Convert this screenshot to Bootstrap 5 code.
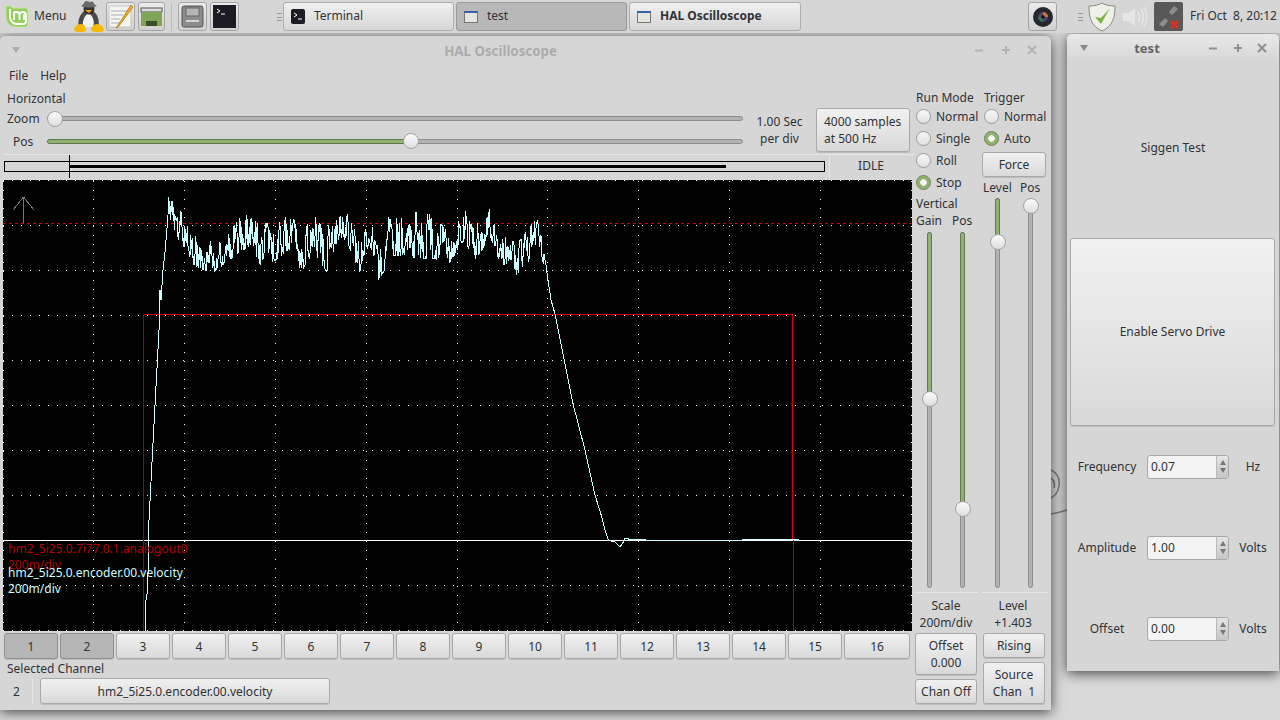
<!DOCTYPE html>
<html lang="en">
<head>
    <meta charset="UTF-8">
    <title>HAL Oscilloscope</title>
    <link href="https://cdn.jsdelivr.net/npm/bootstrap@5.3.0/dist/css/bootstrap.min.css" rel="stylesheet">
    <script src="https://cdn.jsdelivr.net/npm/bootstrap@5.3.0/dist/js/bootstrap.bundle.min.js"></script>
    <style>
        body {
            margin: 0;
            background: #d8d8d8;
            font-family: "Noto Sans", "Liberation Sans", sans-serif;
            font-size: 12px;
            line-height: 17px;
            color: #2f3336;
        }
        .desktop { width: 1280px; height: 720px; overflow: hidden; background: #d9d9d9; }

        /* top panel */
        .panel { height: 33px; background: #d6d6d6; position: relative; z-index: 3; }
        .logo-mint { margin-left: 5px; }
        .menu-label { width: 40px; margin-left: 4px; padding-bottom: 2px; }
        .launch { width: 29px; height: 29px; border: 1px solid #a5a5a5; border-radius: 3px; background: linear-gradient(#ececec, #d0d0d0); flex: none; }
        .launch svg { display: block; }
        .launch-sep { width: 1px; height: 28px; background: #bdbdbd; margin: 0 6px; }
        .handle { width: 5px; height: 8px; border-top: 1px solid #999; border-bottom: 1px solid #999; position: relative; }
        .handle::after { content: ""; position: absolute; left: 0; right: 0; top: 3px; border-top: 1px solid #999; }
        .task { width: 171px; height: 29px; border: 1px solid #adadad; border-radius: 3px; background: linear-gradient(#f0f0f0, #d6d6d6); padding-left: 7px; margin-right: 2px; }
        .task-on { background: #b8b8b8; border-color: #999; }
        .task-win { width: 14px; height: 12px; background: #e6e6e0; border: 1px solid #777; border-top: 2px solid #2f62a8; }
        .task-txt { margin-left: 9px; padding-bottom: 2px; }
        .clock { margin-left: 7px; white-space: pre; padding-bottom: 2px; }

        /* windows */
        .win { position: absolute; background: #d6d6d6; border-radius: 5px 5px 0 0; box-shadow: 0 2px 13px rgba(0, 0, 0, .72); }
        .win-scope { left: 0; top: 36px; width: 1051px; height: 674px; }
        .win-test { left: 1067px; top: 34px; width: 212px; height: 637px; }
        .titlebar { height: 28px; }
        .win-test .titlebar { background: linear-gradient(#e9e9e9, #d6d6d6); border-radius: 5px 5px 0 0; }
        .title-text { font-weight: 700; color: #acacac; font-size: 13.3px; padding-top: 2px; }
        .win-test .title-text { color: #666; font-size: 13px; padding-top: 0; }
        .tri { width: 0; height: 0; border: 4.5px solid transparent; border-top: 6px solid #adadad; border-bottom: 0; }
        .win-test .tri { border-top-color: #8a8a8a; }
        .win-ctl { width: 86px; padding-right: 14px; color: #b2b2b2; }
        .win-test .win-ctl { width: 80px; padding-right: 12px; color: #909090; }

        /* gtk style widgets */
        .gtk-btn {
            --bs-btn-padding-x: 0;
            --bs-btn-padding-y: 0;
            --bs-btn-font-size: 12px;
            --bs-btn-line-height: 17px;
            --bs-btn-border-radius: 3px;
            --bs-btn-color: #2f3336;
            background: linear-gradient(#f1f1f1, #d9d9d9);
            border: 1px solid #a9a9a9;
            box-shadow: 0 1px 0 #bdbdbd;
            display: block;
        }
        .gtk-on { background: #b6b6b6; border-color: #8f8f8f; }
        .gtk-radio.form-check-input {
            width: 15px; height: 15px; margin: 0; flex: none;
            background: linear-gradient(#f8f8f8, #e0e0e0);
            border: 1px solid #9c9c9c;
        }
        .gtk-radio.form-check-input:checked {
            background: radial-gradient(circle, #f4f4f4 0 3px, #8fb271 3.6px);
            border-color: #6d8257;
        }
        .radio-row { height: 22px; gap: 5px; }
        .thumb {
            position: absolute; width: 16px; height: 16px; border-radius: 50%;
            background: linear-gradient(#fbfbfb, #dedede); border: 1px solid #a2a2a2;
            transform: translate(-50%, -50%);
        }
        .hslide { position: relative; height: 5px; background: #b3b3b3; border: 1px solid #8c8c8c; border-radius: 3px; }
        .hfill { height: 100%; background: #8fb271; border-radius: 3px 0 0 3px; outline: 1px solid #66784f; }
        .vslide { position: relative; width: 5px; background: #b3b3b3; border: 1px solid #8c8c8c; border-radius: 3px; }
        .vfill { width: 100%; background: #8fb271; border-radius: 3px 3px 0 0; outline: 1px solid #66784f; }
        .sep-h { border-top: 1px solid #e6e6e6; }

        /* scope window */
        .menu-row { height: 22px; padding-left: 9px; gap: 12px; }
        .left-col { width: 911px; margin-left: 3px; }
        .right-col { width: 134px; }
        .h-label { height: 22px; padding: 2px 0 0 4px; }
        .h-name { width: 44px; padding-left: 4px; }
        .sec-text { width: 73px; }
        .status-row { height: 26px; margin-top: 2px; padding-bottom: 3px; }
        .scan-box { position: relative; width: 821px; height: 11px; margin-left: 1px; border: 1px solid #000; }
        .scan-line { position: absolute; left: 65px; top: 3px; width: 656px; height: 3px; background: #000; }
        .scan-tick { position: absolute; left: 64px; top: -7px; width: 1px; height: 23px; background: #000; }
        .idle { width: 83px; margin-left: 4px; border-left: 1px solid #e6e6e6; line-height: 24px; }
        .screen { position: relative; width: 909px; height: 451px; background: #000; }
        .screen svg { display: block; }
        .screen-text { position: absolute; left: 5px; top: 361px; line-height: 16px; white-space: nowrap; }
        .t-red { color: #b30000; }
        .t-cyan { color: #ccffff; position: absolute; left: 0; top: 24px; }
        .chan-row { gap: 2px; margin-top: 2px; padding-left: 1px; height: 26px; }
        .chan-btn { width: 54px; height: 26px; }
        .chan-last { width: 66px; }
        .sel-label { height: 18px; padding-left: 4px; }
        .sel-row { height: 26px; margin-top: 1px; }
        .sel-num { width: 30px; padding-left: 10px; height: 26px; border-right: 1px solid #e6e6e6; }
        .sel-btn { width: 290px; height: 26px; margin-left: 7px; }
        .col-a { width: 68px; padding-left: 2px; }
        .col-b { width: 66px; }
        .cap-one { height: 19px; padding-top: 3px; }
        .cap-vert { height: 19px; padding-top: 2px; }
        .cap-pair { height: 17px; }
        .slider-pair-a { height: 356px; margin-top: 3px; padding-left: 11px; gap: 28px; }
        .slider-pair-b { height: 390px; margin-top: 1px; padding-left: 13px; gap: 28px; }
        .readout { margin-top: 4px; padding-top: 4px; text-align: center; height: 39px; }
        .readout-a { margin-left: -2px; width: 64px; }
        .readout-b { padding-right: 4px; }
        .force { width: 64px; height: 25px; margin-top: 3px; }

        /* test window */
        .siggen { height: 176px; padding-bottom: 6px; }
        .big-btn { width: 205px; height: 188px; margin-left: 3px; padding-bottom: 2px; }
        .sig-row { height: 81px; }
        .sig-name { width: 80px; }
        .spin { width: 82px; height: 24px; border: 1px solid #a8a8a8; border-radius: 3px; background: #f4f4f4; overflow: hidden; }
        .spin-in.form-control { border: 0; border-radius: 0; background: transparent; padding: 0 0 0 3px; font-size: 12px; color: #2f3336; height: 22px; min-height: 0; line-height: 22px; }
        .spin-arrows { width: 12px; background: linear-gradient(#e4e4e4, #c6c6c6); border-left: 1px solid #bbb; gap: 3px; }
        .arr-up { width: 0; height: 0; border: 3.5px solid transparent; border-bottom: 5px solid #777; border-top: 0; }
        .arr-down { width: 0; height: 0; border: 3.5px solid transparent; border-top: 5px solid #777; border-bottom: 0; }
        .sig-unit { width: 48px; }
        .swirl { position: absolute; left: 1051px; top: 468px; z-index: 0; }
    </style>
</head>
<body>
<div class="desktop position-relative">

    <!-- panel -->
    <div class="panel d-flex align-items-center">
        <svg class="logo-mint" width="25" height="24" viewBox="0 0 25 24">
            <path d="M1 1h6v2h13c2 0 3 1 3 3v13c0 2-1 3-3 3h-8C5 22 1 18 1 11z" fill="#93cf5f" stroke="#c4e6a0"/>
            <path d="M5 4v8c0 4 3 7 7 7h6c2 0 3-1 3-3V10c0-2-1-3-3-3-2 0-3 1-3.500 2-.5-1-1.500-2-3.500-2-1 0-2 0-2.500 1" fill="none" stroke="#fff" stroke-width="1.800"/>
            <path d="M9 8v7M14.500 9v6M19 9v6" stroke="#fff" stroke-width="1.800"/>
        </svg>
        <span class="menu-label">Menu</span>
        <svg width="30" height="32" viewBox="0 0 30 32">
            <path d="M11 9C6 13 3 20 5 26l19 0c2-6 0-13-6-17z" fill="#4a4a4a"/>
            <path d="M13 13c-3 3-5 8-4 13h10c2-5 0-10-3-13z" fill="#f2f2f2"/>
            <circle cx="15" cy="8" r="5.500" fill="#333"/>
            <path d="M7 5c3-1 3-5 5-5s3 1 4 1 2-1 3 0 1 3 4 4c-5 2-11 2-16 0z" fill="#6a6a6a"/>
            <path d="M11 9h7l-3 3z" fill="#f5a800"/>
            <path d="M0 29c0-3 3-6 7-6 3 0 5 3 5 6s-11 3-12 0zM17 29c0-3 3-6 6-6 3 0 7 3 7 6s-12 3-13 0z" fill="#f6b800"/>
        </svg>
        <div class="launch" style="margin-left:2px">
            <svg width="27" height="27" viewBox="0 0 27 27">
                <rect x="2" y="3" width="22" height="21" fill="#f6f6f0" stroke="#c4c4c4"/>
                <path d="M4 8h18M4 12h12M4 16h9M4 20h9" stroke="#aab"/>
                <path d="M24 2L11 22l-2 3 3-2L26 4z" fill="#f0b020" stroke="#a06a10" stroke-width=".7"/>
            </svg>
        </div>
        <div class="launch" style="width:27px;margin-left:3px">
            <svg width="25" height="27" viewBox="0 0 25 27">
                <rect x="2" y="5" width="21" height="4" fill="#dcdcdc" stroke="#555"/>
                <rect x="2" y="9" width="21" height="14" fill="#7fa556"/>
                <rect x="7" y="18" width="11" height="5" fill="#3c4e2a"/>
            </svg>
        </div>
        <div class="launch-sep"></div>
        <div class="launch">
            <svg width="27" height="27" viewBox="0 0 27 27">
                <rect x="3" y="3" width="21" height="21" rx="2" fill="#8c8c8c" stroke="#555"/>
                <rect x="7" y="5" width="13" height="8" fill="#b5b5b5" stroke="#666"/>
                <rect x="7" y="17" width="13" height="2" fill="#d5d5d5"/>
            </svg>
        </div>
        <div class="launch" style="margin-left:3px">
            <svg width="27" height="27" viewBox="0 0 27 27">
                <rect x="2" y="2" width="23" height="23" fill="#1d1c24"/>
                <path d="M6 6l3 2-3 2M10 11h4" stroke="#fff" fill="none"/>
            </svg>
        </div>
        <div class="handle" style="margin-left:38px;margin-right:1px"></div>
        <div class="task d-flex align-items-center">
            <svg width="14" height="15" viewBox="0 0 14 15"><rect width="14" height="15" rx="2" fill="#1d1c24"/><path d="M3 4l3 2-3 2M7 10h4" stroke="#fff" fill="none"/></svg>
            <span class="task-txt">Terminal</span>
        </div>
        <div class="task task-on d-flex align-items-center">
            <div class="task-win"></div><span class="task-txt">test</span>
        </div>
        <div class="task d-flex align-items-center" style="width:172px">
            <div class="task-win"></div><span class="task-txt fw-bold">HAL Oscilloscope</span>
        </div>
        <div class="launch" style="margin-left:225px">
            <svg width="27" height="27" viewBox="0 0 27 27">
                <circle cx="14" cy="14" r="10" fill="#26262c"/>
                <circle cx="14" cy="14" r="5" fill="#5a3f6e"/>
                <path d="M14 9a5 5 0 0 1 5 5h-5z" fill="#c7762f"/><path d="M9 14a5 5 0 0 0 5 5v-5z" fill="#2f7a5a"/>
                <circle cx="14" cy="14" r="1.800" fill="#15151a"/>
            </svg>
        </div>
        <div class="handle" style="margin-left:21px"></div>
        <svg width="30" height="30" viewBox="0 0 30 30" style="margin-left:4px">
            <path d="M15 1c3 2 8 3 13 3 0 11-2 20-13 25C4 24 2 15 2 4c5 0 10-1 13-3z" fill="#f0f0ea" stroke="#8a8a82"/>
            <path d="M8 15l6 7 9-16-9 10z" fill="#7cb342"/>
        </svg>
        <svg width="28" height="28" viewBox="0 0 28 28" style="margin-left:4px">
            <path d="M2 10h6l6-5v18l-6-5H2z" fill="#e6e6e6"/>
            <path d="M17 9c2 3 2 7 0 10M20 6c3 5 3 11 0 16M23 4c4 6 4 14 0 20" fill="none" stroke="#e6e6e6" stroke-width="1.600"/>
        </svg>
        <svg width="29" height="29" viewBox="0 0 29 29" style="margin-left:5px">
            <rect width="29" height="29" rx="2" fill="#585858"/>
            <path d="M5 22l6-6 3 3-5 6zM24 7l-6 6-3-3 5-6z" fill="#8d8d8d"/>
            <path d="M17 19l7 7M24 19l-7 7" stroke="#e42b20" stroke-width="2.600"/>
        </svg>
        <span class="clock">Fri Oct  8, 20:12</span>
    </div>

    <svg class="swirl" width="16" height="50" viewBox="0 0 16 50">
        <path d="M0 2c6 3 9 9 8 16-1 6-4 10-8 12M0 10c3 2 4 6 3 10M0 46c6-1 11-2 16-4" fill="none" stroke="#7e7e7e" stroke-width="1.500"/>
    </svg>

    <!-- scope window -->
    <div class="win win-scope">
        <div class="titlebar d-flex align-items-center">
            <div style="width:36px;padding-left:12px"><div class="tri"></div></div>
            <div class="title-text flex-grow-1 text-center">HAL Oscilloscope</div>
            <div class="win-ctl d-flex justify-content-between align-items-center">
                <svg width="10" height="10" style="margin-left:9px"><path d="M1 5.500h8" stroke="currentColor" stroke-width="2"/></svg>
                <svg width="10" height="10"><path d="M1 5h8M5 1v8" stroke="currentColor" stroke-width="2"/></svg>
                <svg width="10" height="10"><path d="M1 1l8 8M9 1l-8 8" stroke="currentColor" stroke-width="2"/></svg>
            </div>
        </div>
        <div class="menu-row d-flex align-items-center"><span>File</span><span>Help</span></div>
        <div class="d-flex">
            <div class="left-col">
                <div class="h-label d-flex align-items-center">Horizontal</div>
                <div class="d-flex" style="height:44px">
                    <div style="width:740px">
                        <div class="d-flex align-items-center" style="height:21px">
                            <div class="h-name">Zoom</div>
                            <div class="hslide flex-grow-1"><div class="thumb" style="left:1%;top:50%"></div></div>
                        </div>
                        <div class="d-flex align-items-center" style="height:24px">
                            <div class="h-name" style="padding-left:10px">Pos</div>
                            <div class="hslide flex-grow-1"><div class="hfill" style="width:52.3%"></div><div class="thumb" style="left:52.3%;top:50%"></div></div>
                        </div>
                    </div>
                    <div class="sec-text text-center align-self-center">1.00 Sec<br>per div</div>
                    <button class="btn gtk-btn text-start" style="width:94px;height:44px;padding-left:7px">4000 samples<br>at 500 Hz</button>
                </div>
                <div class="status-row d-flex align-items-center sep-h">
                    <div class="scan-box"><div class="scan-line"></div><div class="scan-tick"></div></div>
                    <div class="idle text-center">IDLE</div>
                </div>
                <div class="screen">
                    <svg id="scope" width="909" height="451" viewBox="3 180 909 451" shape-rendering="crispEdges"></svg>
                    <div class="screen-text">
                        <div class="t-red">hm2_5i25.0.7i77.0.1.analogout0<br>200m/div</div>
                        <div class="t-cyan">hm2_5i25.0.encoder.00.velocity<br>200m/div</div>
                    </div>
                </div>
                <div class="chan-row d-flex">
                    <button class="btn gtk-btn gtk-on chan-btn">1</button>
                    <button class="btn gtk-btn gtk-on chan-btn">2</button>
                    <button class="btn gtk-btn chan-btn">3</button>
                    <button class="btn gtk-btn chan-btn">4</button>
                    <button class="btn gtk-btn chan-btn">5</button>
                    <button class="btn gtk-btn chan-btn">6</button>
                    <button class="btn gtk-btn chan-btn">7</button>
                    <button class="btn gtk-btn chan-btn">8</button>
                    <button class="btn gtk-btn chan-btn">9</button>
                    <button class="btn gtk-btn chan-btn">10</button>
                    <button class="btn gtk-btn chan-btn">11</button>
                    <button class="btn gtk-btn chan-btn">12</button>
                    <button class="btn gtk-btn chan-btn">13</button>
                    <button class="btn gtk-btn chan-btn">14</button>
                    <button class="btn gtk-btn chan-btn">15</button>
                    <button class="btn gtk-btn chan-btn chan-last">16</button>
                </div>
                <div class="sel-label d-flex align-items-center">Selected Channel</div>
                <div class="sel-row d-flex align-items-center">
                    <div class="sel-num d-flex align-items-center">2</div>
                    <button class="btn gtk-btn sel-btn">hm2_5i25.0.encoder.00.velocity</button>
                </div>
            </div>
            <div class="right-col d-flex">
                <div class="col-a">
                    <div class="cap-one">Run Mode</div>
                    <div class="radio-row d-flex align-items-center"><input class="form-check-input gtk-radio" type="radio" name="run"><span>Normal</span></div>
                    <div class="radio-row d-flex align-items-center"><input class="form-check-input gtk-radio" type="radio" name="run"><span>Single</span></div>
                    <div class="radio-row d-flex align-items-center"><input class="form-check-input gtk-radio" type="radio" name="run"><span>Roll</span></div>
                    <div class="radio-row d-flex align-items-center"><input class="form-check-input gtk-radio" type="radio" name="run" checked><span>Stop</span></div>
                    <div class="cap-vert">Vertical</div>
                    <div class="cap-pair d-flex"><span style="width:36px">Gain</span><span>Pos</span></div>
                    <div class="slider-pair-a d-flex">
                        <div class="vslide"><div class="vfill" style="height:46.9%"></div><div class="thumb" style="left:50%;top:46.9%"></div></div>
                        <div class="vslide"><div class="vfill" style="height:78.1%"></div><div class="thumb" style="left:50%;top:78.1%"></div></div>
                    </div>
                    <div class="readout readout-a sep-h">Scale<br>200m/div</div>
                    <button class="btn gtk-btn" style="width:62px;height:42px;margin:2px 0 4px -1px">Offset<br>0.000</button>
                    <button class="btn gtk-btn" style="width:62px;height:25px;margin-left:-1px">Chan Off</button>
                </div>
                <div class="col-b">
                    <div class="cap-one" style="padding-left:2px">Trigger</div>
                    <div class="radio-row d-flex align-items-center" style="padding-left:2px"><input class="form-check-input gtk-radio" type="radio" name="trig"><span>Normal</span></div>
                    <div class="radio-row d-flex align-items-center" style="padding-left:2px"><input class="form-check-input gtk-radio" type="radio" name="trig" checked><span>Auto</span></div>
                    <button class="btn gtk-btn force">Force</button>
                    <div class="d-flex align-items-center" style="height:20px;padding-left:1px"><span style="width:37px">Level</span><span>Pos</span></div>
                    <div class="slider-pair-b d-flex">
                        <div class="vslide"><div class="vfill" style="height:11%"></div><div class="thumb" style="left:50%;top:11%"></div></div>
                        <div class="vslide"><div class="thumb" style="left:50%;top:1.8%"></div></div>
                    </div>
                    <div class="readout readout-b sep-h">Level<br>+1.403</div>
                    <button class="btn gtk-btn" style="width:62px;height:25px;margin:2px 0 4px 1px">Rising</button>
                    <button class="btn gtk-btn" style="width:62px;height:42px;margin-left:1px">Source<br>Chan&nbsp; 1</button>
                </div>
            </div>
        </div>
    </div>

    <!-- test window -->
    <div class="win win-test d-flex flex-column">
        <div class="titlebar d-flex align-items-center">
            <div style="width:28px;padding-left:13px"><div class="tri"></div></div>
            <div class="title-text flex-grow-1 text-center">test</div>
            <div class="win-ctl d-flex justify-content-between align-items-center">
                <svg width="10" height="10" style="margin-left:9px"><path d="M1 5.500h8" stroke="currentColor" stroke-width="2"/></svg>
                <svg width="10" height="10"><path d="M1 5h8M5 1v8" stroke="currentColor" stroke-width="2"/></svg>
                <svg width="10" height="10"><path d="M1 1l8 8M9 1l-8 8" stroke="currentColor" stroke-width="2"/></svg>
            </div>
        </div>
        <div class="siggen d-flex align-items-center justify-content-center">Siggen Test</div>
        <button class="btn gtk-btn big-btn">Enable Servo Drive</button>
        <div class="sig-row d-flex align-items-center">
            <div class="sig-name text-center">Frequency</div>
            <div class="spin d-flex"><input class="form-control spin-in" value="0.07"><div class="spin-arrows d-flex flex-column align-items-center justify-content-center flex-shrink-0"><div class="arr-up"></div><div class="arr-down"></div></div></div>
            <div class="sig-unit text-center">Hz</div>
        </div>
        <div class="sig-row d-flex align-items-center">
            <div class="sig-name text-center">Amplitude</div>
            <div class="spin d-flex"><input class="form-control spin-in" value="1.00"><div class="spin-arrows d-flex flex-column align-items-center justify-content-center flex-shrink-0"><div class="arr-up"></div><div class="arr-down"></div></div></div>
            <div class="sig-unit text-center">Volts</div>
        </div>
        <div class="sig-row d-flex align-items-center">
            <div class="sig-name text-center">Offset</div>
            <div class="spin d-flex"><input class="form-control spin-in" value="0.00"><div class="spin-arrows d-flex flex-column align-items-center justify-content-center flex-shrink-0"><div class="arr-up"></div><div class="arr-down"></div></div></div>
            <div class="sig-unit text-center">Volts</div>
        </div>
    </div>
</div>

<script>
    // draw grid and traces of the scope, coordinates are page pixels
    var parts = [];
    function line(x1, y1, x2, y2, col, extra) {
        parts.push('<line x1="' + x1 + '" y1="' + y1 + '" x2="' + x2 + '" y2="' + y2 + '" stroke="' + col + '" ' + (extra || '') + '/>');
    }
    var dots = 'stroke-dasharray="1 8"';
    for (var k = 0; k <= 10; k++) {
        var gx = Math.round(2.5 + 90.8 * k) + 0.5;
        var gy = Math.round(180.3 + 45 * k) + 0.5;
        line(gx, 181, gx, 631, '#fff', dots);
        line(3, gy, 912, gy, '#fff', dots);
    }
    line(3, 540.5, 912, 540.5, '#fff');
    line(3, 223.5, 912, 223.5, '#d00000', 'stroke-dasharray="3 3"');
    line(143.5, 315, 143.5, 631, '#a80000');
    line(143.5, 314.5, 793, 314.5, '#d80000');
    line(792.5, 314, 792.5, 540, '#e00000');
    line(793.5, 540, 793.5, 631, '#b00000');
    parts.push('<path d="M23.500 197V223M23.500 197L13 210M23.500 197L34 210" fill="none" stroke="#777"/>');

    // noise band of the trace: zoomed x, top, bottom read off the picture
    var band = [[85,30,130],[130,90,180],[160,140,240],[215,170,265],[250,170,240],[310,85,190],[350,110,240],[400,120,230],[455,85,190],[480,160,265],[520,90,200],[560,130,260],[590,75,170],[630,90,190],[660,180,265],[690,90,170],[710,190,295],[760,60,210],[800,120,210],[820,80,220],[880,90,220],[930,150,230],[975,55,160],[1000,130,230],[1050,70,160],[1080,130,230],[1130,180,270],[1190,100,200],[1215,200,240]];
    var seed = 77;
    function rnd() { seed = (seed * 1664525 + 1013904223) % 4294967296; return seed / 4294967296; }

    var pts = [[145.5,631],[146,600],[147.7,590],[149,520],[155,405],[159.3,325],[160,290],[161,300],[162,285],[163,270],[165,252],[167,228],[168,215]];
    var walk = 0, seg = 0;
    for (var zx = 85; zx <= 1215; zx += 1.5) {
        while (band[seg + 1] && band[seg + 1][0] < zx) seg++;
        var a = band[seg], b = band[seg + 1] || a;
        var f = b === a ? 0 : (zx - a[0]) / (b[0] - a[0]);
        var hi = a[1] + (b[1] - a[1]) * f, lo = a[2] + (b[2] - a[2]) * f;
        walk = 0.6 * walk + (rnd() - 0.5) * 2.4;
        var c = Math.max(-1, Math.min(1, walk));
        pts.push([140 + zx / 3, 185 + ((hi + lo) / 2 + c * (lo - hi) / 2) / 3]);
    }
    pts = pts.concat([[546,265],[548,280],[551,300],[555,314],[573.3,405],[585,450],[595,495],[601.7,516.7],[605,530],[608.3,540],[612,541.5],[615,542],[617,544],[620,547],[622,544],[624,541],[625,538.5],[628,538.5],[629,539.5],[645,539.5],[645,540.5],[742,540.5],[742,539.5],[798,539.5],[799,540.5]]);
    parts.push('<polyline fill="none" stroke="#ccffff" points="' + pts.map(function (p) { return p[0].toFixed(1) + ',' + p[1].toFixed(1); }).join(' ') + '"/>');
    document.getElementById('scope').innerHTML = parts.join('');
</script>
</body>
</html>
